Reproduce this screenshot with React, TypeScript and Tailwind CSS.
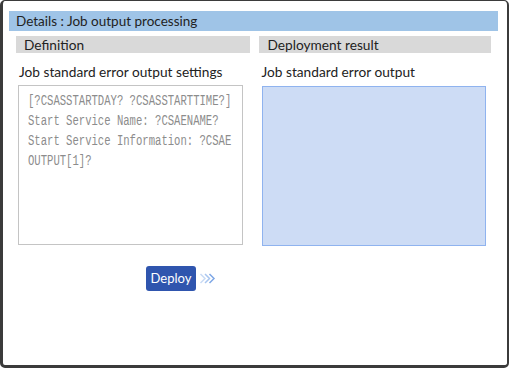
import React from "react";

const lines = [
  "[?CSASSTARTDAY? ?CSASSTARTTIME?]",
  "Start Service Name: ?CSAENAME?",
  "Start Service Information: ?CSAE",
  "OUTPUT[1]?",
];

const Chevrons = () => (
  <svg width="18" height="13" viewBox="0 0 18 13" fill="none">
    <path d="M1.5 2l4.5 4.5-4.5 4.5" stroke="#c9dbf5" strokeWidth="1.5" />
    <path d="M6 2l4.5 4.5-4.5 4.5" stroke="#a9c6f0" strokeWidth="1.5" />
    <path d="M10.5 2l4.5 4.5-4.5 4.5" stroke="#7fa8e6" strokeWidth="1.5" />
  </svg>
);

export default function App() {
  return (
    <div className="w-[509px] h-[368px] bg-white border-[#3b3b3b] border-t border-l-[3px] border-r-2 border-b-[3px] rounded-[5px] pt-[10px] pl-[6px] pr-[9px] font-['Lato',sans-serif] text-[#222]">
      <div className="h-5 bg-[#9fc4e7] pl-[7px] text-[13.5px] leading-5">Details : Job output processing</div>

      <div className="flex gap-[9px] px-[7px] mt-[5px]">
        <div className="w-[234px]">
          <div className="h-[17px] bg-[#d9d9d9] pl-[8px] text-[13.7px] leading-[17px]">Definition</div>
          <div className="mt-[10px] pl-[3px] text-[13.7px] leading-[18px]">Job standard error output settings</div>
          <div className="mt-[4px] ml-[2px] w-[225px] h-[160px] border border-[#c4c4c4] pl-[9px] pt-[5px] overflow-hidden">
            {lines.map((l) => (
              <div
                key={l}
                className="font-['Liberation_Mono',monospace] text-[14px] leading-[20px] text-[#8c8c8c] whitespace-pre origin-left scale-x-[0.756]"
              >
                {l}
              </div>
            ))}
          </div>
          <div className="flex items-center mt-[21px] ml-[130px] gap-[3px]">
            <button className="h-[25px] w-[50px] bg-[#2f55ae] rounded-[3px] text-white text-[13px]">Deploy</button>
            <Chevrons />
          </div>
        </div>

        <div className="w-[233px]">
          <div className="h-[17px] bg-[#d9d9d9] pl-[9px] text-[13.7px] leading-[17px]">Deployment result</div>
          <div className="mt-[10px] pl-[3px] text-[13.7px] leading-[18px]">Job standard error output</div>
          <div className="mt-[5px] ml-[3px] w-[224px] h-[160px] bg-[#cddcf5] border border-[#8fb3ef]" />
        </div>
      </div>
    </div>
  );
}
